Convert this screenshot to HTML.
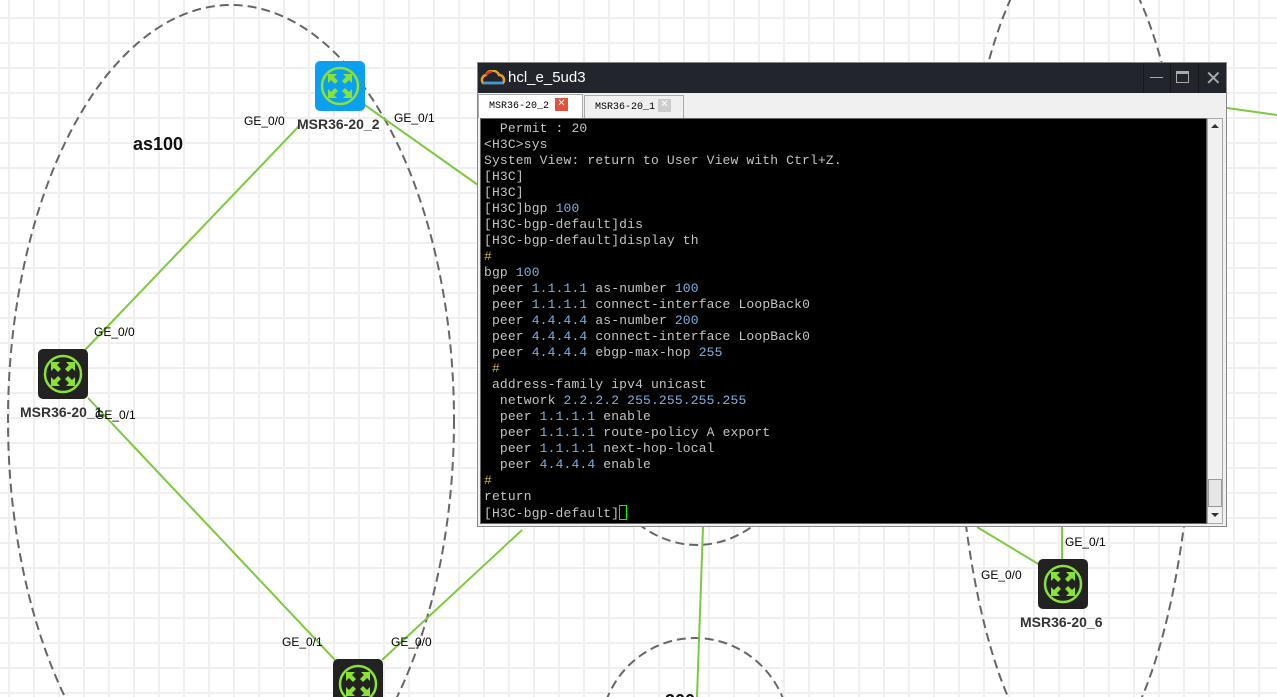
<!DOCTYPE html>
<html><head><meta charset="utf-8"><style>
*{margin:0;padding:0;box-sizing:border-box}
html,body{width:1277px;height:697px;overflow:hidden}
body{position:relative;background:#fff;font-family:"Liberation Sans",sans-serif}
svg.top{position:absolute;left:0;top:0}
.lbl{position:absolute;font-size:12px;color:#000}
.name{position:absolute;font-size:14px;font-weight:bold;color:#333}
.win{position:absolute;left:477px;top:62px;width:750px;height:465px;background:#f0f0f0;border:1px solid #888}
.tb{height:30px;background:#22262c;color:#fff;font-size:15px;position:relative}
.tb span{position:absolute;left:30px;top:6px}
.tabs{height:25px;position:relative;background:#f0f0f0}
.tab{position:absolute;font-family:"Liberation Mono",monospace;font-size:10px;color:#000;padding:6px 0 0 10px;height:24px}
.term{position:absolute;left:2px;top:55px;width:727px;height:406px;background:#000;border:1px solid #666;overflow:hidden}
pre{font-family:"Liberation Mono",monospace;font-size:13px;line-height:16px;letter-spacing:0.15px;color:#c4c4c4;position:absolute;left:3px;top:2px}
.n{color:#7fb1de}.h{color:#d4b44a}
.sb{position:absolute;left:729px;top:55px;width:16px;height:406px;background:#f0f0f0;border:1px solid #aaa}
.x{position:absolute;width:13px;height:13px;font-size:10px;line-height:12px;text-align:center;color:#fff;font-family:"Liberation Sans",sans-serif}
.sep{position:absolute;top:0;width:1px;height:30px;background:#15181c}
</style></head><body>
<svg class="top" width="1277" height="697">
<defs>
<pattern id="gp" x="8" y="17" width="25" height="25" patternUnits="userSpaceOnUse">
<rect x="0" y="0" width="2" height="25" fill="#efefef"/><rect x="0" y="0" width="25" height="2" fill="#efefef"/>
</pattern>
<g id="ic">
<circle cx="25" cy="25" r="18" fill="none" stroke="#8ae234" stroke-width="2.5"/>
<g fill="#8ae234"><path d="M13 13h9l-3 3 4 4-3 3-4-4-3 3z"/><path d="M37 13v9l-3-3-4 4-3-3 4-4-3-3z"/><path d="M13 37v-9l3 3 4-4 3 3-4 4 3 3z"/><path d="M37 37h-9l3-3-4-4 3-3 4 4 3-3z"/></g></g>
</defs>
<rect width="1277" height="697" fill="url(#gp)"/>
<g fill="none" stroke="#666" stroke-width="2" stroke-dasharray="9,5">
<ellipse cx="231" cy="420" rx="223" ry="415"/>
<ellipse cx="1075" cy="351" rx="120" ry="417"/>
<ellipse cx="697" cy="380" rx="120" ry="165"/>
<ellipse cx="695" cy="735" rx="95" ry="97"/>
</g>
<g stroke="#7cc840" stroke-width="2">
<line x1="300" y1="125" x2="85" y2="350"/>
<line x1="362" y1="103" x2="478" y2="185"/>
<line x1="88" y1="398" x2="335" y2="660"/>
<line x1="382" y1="660" x2="522" y2="530"/>
<line x1="703" y1="527" x2="697" y2="697"/>
<line x1="1227" y1="108" x2="1277" y2="115"/>
<line x1="977" y1="527" x2="1040" y2="565"/>
<line x1="1062" y1="527" x2="1062" y2="560"/>
</g>
<rect x="315" y="61" width="50" height="50" rx="5" fill="#0aa0ef"/><use href="#ic" x="315" y="61"/>
<rect x="38" y="349" width="50" height="50" rx="5" fill="#222"/><use href="#ic" x="38" y="349"/>
<rect x="333" y="659" width="50" height="50" rx="5" fill="#222"/><use href="#ic" x="333" y="659"/>
<rect x="1038" y="559" width="50" height="50" rx="5" fill="#222"/><use href="#ic" x="1038" y="559"/>
<text x="133" y="150" font-family="Liberation Sans" font-weight="bold" font-size="18" fill="#111">as100</text>
<text x="665" y="707" font-family="Liberation Sans" font-weight="bold" font-size="18" fill="#111">300</text>
</svg>
<div class="name" style="left:297px;top:116px">MSR36-20_2</div>
<div class="name" style="left:20px;top:404px">MSR36-20_1</div>
<div class="name" style="left:1020px;top:614px">MSR36-20_6</div>
<div class="lbl" style="left:244px;top:114px">GE_0/0</div>
<div class="lbl" style="left:394px;top:111px">GE_0/1</div>
<div class="lbl" style="left:94px;top:325px">GE_0/0</div>
<div class="lbl" style="left:95px;top:408px">GE_0/1</div>
<div class="lbl" style="left:282px;top:635px">GE_0/1</div>
<div class="lbl" style="left:391px;top:635px">GE_0/0</div>
<div class="lbl" style="left:1065px;top:535px">GE_0/1</div>
<div class="lbl" style="left:981px;top:568px">GE_0/0</div>
<div class="win">
<div class="tb">
<svg style="position:absolute;left:2px;top:7px" width="26" height="16"><path d="M3 13 A5 5 0 0 1 6 5 A7 7 0 0 1 19 5 A5 5 0 0 1 23 13 Z" fill="none" stroke="#e8a020" stroke-width="2.5"/><path d="M3 13H23" stroke="#3a9ae0" stroke-width="2.5"/><path d="M6 5A7 7 0 0 1 12 2" stroke="#e03030" stroke-width="2.5" fill="none"/></svg>
<span>hcl_e_5ud3</span>
<div class="sep" style="left:665px"></div><div class="sep" style="left:692px"></div><div class="sep" style="left:720px"></div>
<div style="position:absolute;left:672px;top:14px;width:13px;height:1px;background:#aaa"></div>
<div style="position:absolute;left:698px;top:8px;width:13px;height:12px;border:1px solid #aaa;border-top-width:3px"></div>
<div style="position:absolute;left:727px;top:3px;color:#aaa;font-size:20px">✕</div>
</div>
<div class="tabs">
<div class="tab" style="left:0;width:105px;background:#fff;border:1px solid #aaa;border-bottom:none;top:1px">MSR36-20_2</div>
<div class="x" style="left:77px;top:5px;background:#e0533e">✕</div>
<div class="tab" style="left:106px;width:100px;background:#f0f0f0;border:1px solid #aaa;top:2px;color:#000">MSR36-20_1</div>
<div class="x" style="left:180px;top:6px;background:#ccc">✕</div>
</div>
<div class="term"><pre>  Permit : 20
&lt;H3C&gt;sys
System View: return to User View with Ctrl+Z.
[H3C]
[H3C]
[H3C]bgp <span class="n">100</span>
[H3C-bgp-default]dis
[H3C-bgp-default]display th
<span class="h">#</span>
bgp <span class="n">100</span>
 peer <span class="n">1.1.1.1</span> as-number <span class="n">100</span>
 peer <span class="n">1.1.1.1</span> connect-interface LoopBack0
 peer <span class="n">4.4.4.4</span> as-number <span class="n">200</span>
 peer <span class="n">4.4.4.4</span> connect-interface LoopBack0
 peer <span class="n">4.4.4.4</span> ebgp-max-hop <span class="n">255</span>
 <span class="h">#</span>
 address-family ipv4 unicast
  network <span class="n">2.2.2.2 255.255.255.255</span>
  peer <span class="n">1.1.1.1</span> enable
  peer <span class="n">1.1.1.1</span> route-policy A export
  peer <span class="n">1.1.1.1</span> next-hop-local
  peer <span class="n">4.4.4.4</span> enable
<span class="h">#</span>
return
[H3C-bgp-default]<span style="display:inline-block;width:8px;height:15px;border:1px solid #0f0;vertical-align:-3px"></span></pre></div>
<div class="sb">
<div style="position:absolute;left:3px;top:5px;border:4px solid transparent;border-bottom:4px solid #333;border-top:none"></div>
<div style="position:absolute;left:0;top:360px;width:14px;height:28px;border:1px solid #999;background:#e6e6e6"></div>
<div style="position:absolute;left:3px;top:394px;border:4px solid transparent;border-top:4px solid #333;border-bottom:none"></div>
</div>
</div>
</body></html>
